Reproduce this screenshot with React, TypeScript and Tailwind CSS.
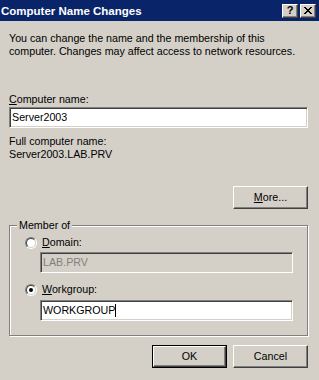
import React from 'react';

const FONT = { fontFamily: '"Liberation Sans", Arial, sans-serif' };

const Raised: React.FC<{ className?: string; children?: React.ReactNode }> = ({ className = '', children }) => (
  <div className={`flex items-center justify-center bg-[#d4d0c8] border border-t-white border-l-white border-b-[#404040] border-r-[#404040] shadow-[inset_-1px_-1px_0_#808080] ${className}`}>
    {children}
  </div>
);

const Edit: React.FC<{ className?: string; disabled?: boolean; children?: React.ReactNode }> = ({ className = '', disabled, children }) => (
  <div
    className={`h-[21px] flex items-center pl-[2px] border border-t-[#808080] border-l-[#808080] border-b-white border-r-white shadow-[inset_1px_1px_0_#404040,inset_-1px_-1px_0_#d4d0c8] ${disabled ? 'bg-[#d4d0c8] text-[#808080]' : 'bg-white text-black'} ${className}`}
  >
    {children}
  </div>
);

const Radio: React.FC<{ checked?: boolean }> = ({ checked }) => (
  <div className="w-[12px] h-[12px] rounded-full border border-t-[#808080] border-l-[#808080] border-b-white border-r-white">
    <div className="w-full h-full rounded-full bg-white border border-t-[#404040] border-l-[#404040] border-b-[#d4d0c8] border-r-[#d4d0c8] flex items-center justify-center">
      {checked && <div className="w-[4px] h-[4px] rounded-full bg-black" />}
    </div>
  </div>
);

export default function App() {
  return (
    <div className="w-[319px] h-[380px] bg-[#d4d0c8] overflow-hidden text-[10.7px] leading-[13px] text-black" style={FONT}>
      {/* title bar */}
      <div className="h-[21px] bg-[#0a246a] flex items-center justify-between pl-[1px] pr-[3px]">
        <span className="text-white font-bold text-[11.5px] leading-[14px]">Computer Name Changes</span>
        <div className="flex gap-[2px]">
          <Raised className="w-[16px] h-[14px]">
            <span className="font-bold text-[11px] leading-[11px]">?</span>
          </Raised>
          <Raised className="w-[16px] h-[14px]">
            <svg width="8" height="7" viewBox="0 0 8 7" shapeRendering="crispEdges">
              <path d="M0 0h2v1H0zM6 0h2v1H6zM1 1h2v1H1zM5 1h2v1H5zM2 2h4v1H2zM3 3h2v1H3zM2 4h4v1H2zM1 5h2v1H1zM5 5h2v1H5zM0 6h2v1H0zM6 6h2v1H6z" fill="#000" />
            </svg>
          </Raised>
        </div>
      </div>

      <div className="pl-[9px] pr-[11px]">
        <p className="mt-[11px]">
          You can change the name and the membership of this
          <br />
          computer. Changes may affect access to network resources.
        </p>

        <div className="mt-[35px]">
          <span className="underline">C</span>omputer name:
        </div>
        <Edit className="mt-[1px]">Server2003</Edit>

        <div className="mt-[7px]">Full computer name:</div>
        <div>Server2003.LAB.PRV</div>

        <div className="flex justify-end mt-[25px]">
          <Raised className="w-[75px] h-[23px]">
            <span>
              <span className="underline">M</span>ore...
            </span>
          </Raised>
        </div>

        {/* Member of group */}
        <div className="relative mt-[16px] h-[111px] border border-[#808080] shadow-[inset_1px_1px_0_#fff,1px_1px_0_#fff] pl-[15px] pr-[14px] pt-[10px]">
          <span className="absolute left-[7px] top-[-7px] bg-[#d4d0c8] px-[2px]">Member of</span>

          <div className="flex items-center h-[13px]">
            <Radio />
            <span className="ml-[5px]">
              <span className="underline">D</span>omain:
            </span>
          </div>
          <Edit disabled className="mt-[3px] ml-[15px]">LAB.PRV</Edit>

          <div className="flex items-center h-[13px] mt-[10px]">
            <Radio checked />
            <span className="ml-[5px]">
              <span className="underline">W</span>orkgroup:
            </span>
          </div>
          <Edit className="mt-[4px] ml-[15px]">
            WORKGROUP<span className="inline-block w-[1px] h-[13px] bg-black" />
          </Edit>
        </div>

        <div className="flex justify-end gap-[6px] mt-[9px]">
          <div className="border border-black">
            <Raised className="w-[73px] h-[21px]">OK</Raised>
          </div>
          <Raised className="w-[75px] h-[23px]">Cancel</Raised>
        </div>
      </div>
    </div>
  );
}
